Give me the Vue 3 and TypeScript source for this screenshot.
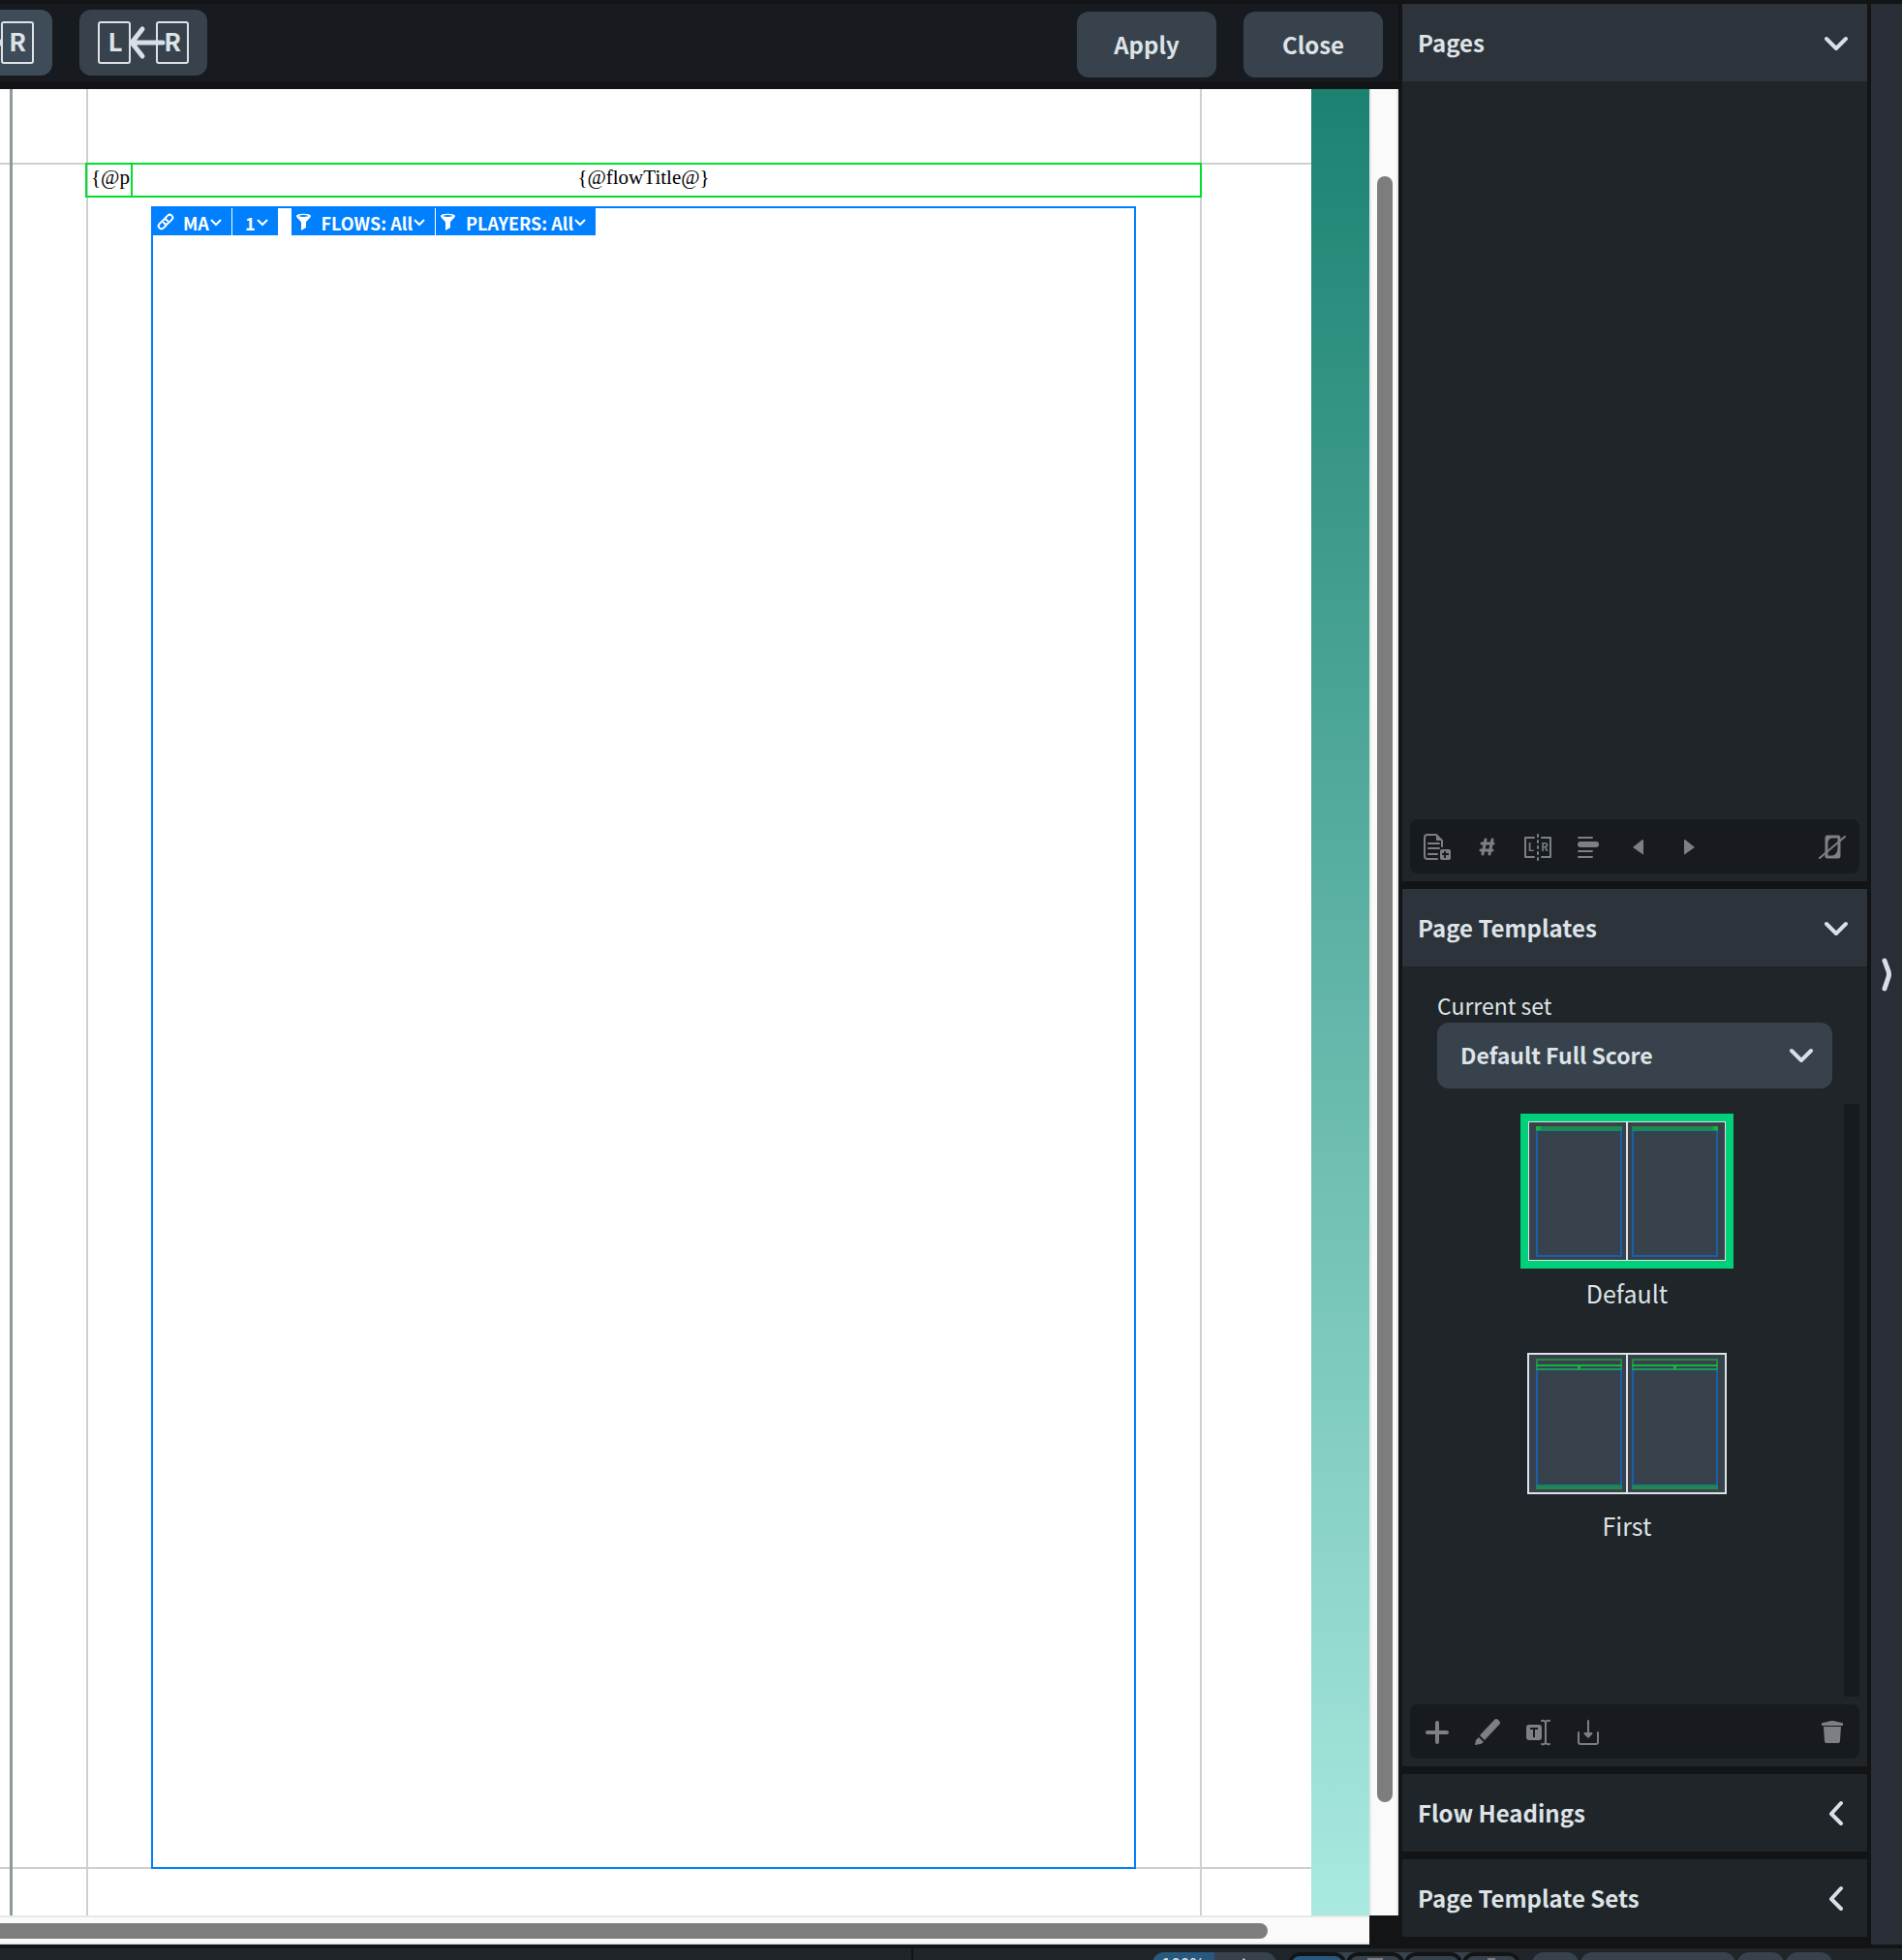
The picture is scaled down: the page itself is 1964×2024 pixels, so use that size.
<script setup lang="ts">
import { ref } from 'vue'

interface FrameTag {
  id: string
  label: string
  icon: 'link' | 'filter' | null
  gapBefore?: boolean
}

const tags: FrameTag[] = [
  { id: 'ma', label: 'MA', icon: 'link' },
  { id: 'number', label: '1', icon: null },
  { id: 'flows', label: 'FLOWS: All', icon: 'filter', gapBefore: true },
  { id: 'players', label: 'PLAYERS: All', icon: 'filter' },
]

const currentSet = ref('Default Full Score')
const selected = ref('Default')
</script>

<template>
  <div class="app">
    <div class="workspace">
      <main class="editor">
        <header class="topbar">
          <div class="copy-tools">
            <button class="btn copy active" type="button" aria-label="Copy left page to right">
              <svg width="96" height="46" viewBox="0 0 96 46">
                <rect class="box" x="2" y="2" width="32" height="42" rx="2" />
                <rect class="box" x="62" y="2" width="32" height="42" rx="2" />
                <text x="19" y="32">L</text>
                <text x="78" y="32">R</text>
                <path class="arrow" d="M28 23H60M49 9L60 23L49 37" />
              </svg>
            </button>
            <button class="btn copy" type="button" aria-label="Copy right page to left">
              <svg width="96" height="46" viewBox="0 0 96 46">
                <rect class="box" x="2" y="2" width="32" height="42" rx="2" />
                <rect class="box" x="62" y="2" width="32" height="42" rx="2" />
                <text x="19" y="32">L</text>
                <text x="78" y="32">R</text>
                <path class="arrow" d="M68 23H36M47 9L36 23L47 37" />
              </svg>
            </button>
          </div>
          <div class="actions">
            <button class="btn" type="button"><span>Apply</span></button>
            <button class="btn" type="button"><span>Close</span></button>
          </div>
        </header>

        <div class="view">
          <div class="view-main">
            <div class="page">
              <i class="guide h top"></i>
              <i class="guide h bottom"></i>
              <i class="guide v left"></i>
              <i class="guide v right"></i>
              <i class="guide v edge"></i>
              <div class="text-frame">
                <span class="token">{@flowTitle@}</span>
                <div class="number-frame"><span class="token">{@p</span></div>
              </div>
              <div class="music-frame">
                <button
                  v-for="tag in tags"
                  :key="tag.id"
                  type="button"
                  class="tag"
                  :class="{ spaced: tag.gapBefore, plain: !tag.icon }"
                >
                  <svg v-if="tag.icon === 'link'" class="tag-icon" width="18" height="18" viewBox="0 0 18 18">
                    <g transform="rotate(-45 9 9)" fill="none" stroke="#fff" stroke-width="2" stroke-linecap="round">
                      <path d="M7 12H3a3 3 0 0 1 0-6H8a3 3 0 0 1 3 4" />
                      <path d="M11 6H15a3 3 0 0 1 0 6H10a3 3 0 0 1-3-4" />
                    </g>
                  </svg>
                  <svg v-else-if="tag.icon === 'filter'" class="tag-icon" width="18" height="18" viewBox="0 0 18 18">
                    <path d="M1 3C1 0 16 0 16 3C16 5 11 8 11 10V15L6 18V10C6 8 1 5 1 3Z" fill="#fff" />
                    <path d="M3 3Q8 1 14 3Q8 5 3 3Z" fill="#0080ff" />
                  </svg>
                  <span>{{ tag.label }}</span>
                  <svg width="12" height="8" viewBox="0 0 12 8">
                    <path d="M1 1L6 6L11 1" fill="none" stroke="#fff" stroke-width="2" />
                  </svg>
                </button>
              </div>
            </div>
            <div class="backdrop"></div>
            <div class="vscroll"><div class="vthumb"></div></div>
          </div>
          <div class="hscroll"><div class="hthumb"></div></div>
        </div>
      </main>

      <aside class="sidebar">
        <section class="panel pages">
          <h2>
            <button class="head open" type="button">
              <span>Pages</span>
              <svg width="24" height="24" viewBox="0 0 24 24"><path d="M2 8L12 18L22 8" /></svg>
            </button>
          </h2>
          <div class="pages-list"></div>
          <div class="tools">
            <button type="button" aria-label="Insert pages">
              <svg viewBox="0 0 32 32">
                <path class="ln" d="M16 29H6a3 3 0 0 1-3-3V7a3 3 0 0 1 3-3h9l6 6v6" />
                <path d="M15 4V10H21Z" />
                <path class="ln" d="M7 13H18M7 18H18M7 24H16" />
                <rect x="19" y="19" width="11" height="11" rx="2" />
                <path class="cut" d="M24 21V28M21 24H28" />
              </svg>
            </button>
            <button type="button" aria-label="Page number change">
              <svg viewBox="0 0 32 32">
                <path class="ln w3" d="M14 9L11 24M21 9L18 24M10 13H22M9 20H21" />
              </svg>
            </button>
            <button type="button" aria-label="Swap pages">
              <svg viewBox="0 0 32 32">
                <path class="ln" d="M12 7H3V27H12M20 7H29V27H20" />
                <path class="ln" d="M16 4V30" stroke-dasharray="2 4" />
                <text x="9" y="21">L</text>
                <text x="23" y="21">R</text>
              </svg>
            </button>
            <button type="button" aria-label="Insert frame break">
              <svg viewBox="0 0 32 32">
                <path class="ln" d="M6 7H20M6 21H20M6 27H20" />
                <rect x="5" y="11" width="22" height="6" rx="3" />
              </svg>
            </button>
            <button type="button" aria-label="Previous">
              <svg viewBox="0 0 32 32"><path d="M10 17L20 9Q21 9 21 10V24Q21 25 20 24Z" /></svg>
            </button>
            <button type="button" aria-label="Next">
              <svg viewBox="0 0 32 32"><path d="M22 17L12 9Q11 9 11 10V24Q11 25 12 24Z" /></svg>
            </button>
            <button class="last" type="button" aria-label="Remove overrides">
              <svg viewBox="0 0 32 32">
                <rect class="ln w3" x="10" y="6" width="13" height="21" rx="1" />
                <path d="M11 7H16Q12 8 11 13ZM22 26H16Q21 24 22 18Z" />
                <path class="ln" d="M3 28L29 6" />
              </svg>
            </button>
          </div>
        </section>

        <section class="panel templates">
          <h2>
            <button class="head open" type="button">
              <span>Page Templates</span>
              <svg width="24" height="24" viewBox="0 0 24 24"><path d="M2 8L12 18L22 8" /></svg>
            </button>
          </h2>
          <div class="set-field">
            <label for="current-set">Current set</label>
            <div class="select-wrap">
              <select id="current-set" v-model="currentSet">
                <option>Default Full Score</option>
              </select>
              <svg width="24" height="24" viewBox="0 0 24 24"><path d="M2 7L12 17L22 7" /></svg>
            </div>
          </div>
          <div class="list-row">
            <div class="template-list">
              <button
                type="button"
                class="template"
                :class="{ selected: selected === 'Default' }"
                @click="selected = 'Default'"
              >
                <svg width="220" height="160" viewBox="0 0 220 160" shape-rendering="crispEdges">
                  <rect width="220" height="160" fill="#00d079" />
                  <rect x="8" y="8" width="204" height="144" fill="#dde3e6" />
                  <rect x="9" y="9" width="202" height="142" fill="#37424d" />
                  <rect x="109" y="9" width="2" height="142" fill="#dde3e6" />
                  <g v-for="x in [16, 115]" :key="x">
                    <rect :x="x + 1" y="15" width="87" height="132" fill="none" stroke="#1a5fa9" stroke-width="2" />
                    <rect :x="x" y="13" width="89" height="3" fill="#268746" />
                    <rect :x="x" y="16" width="89" height="2" fill="#0d8a72" />
                    <rect :x="x === 16 ? 16 : 199" y="13" width="5" height="4" fill="#16b43b" />
                  </g>
                </svg>
                <span>Default</span>
              </button>
              <button
                type="button"
                class="template"
                :class="{ selected: selected === 'First' }"
                @click="selected = 'First'"
              >
                <svg width="220" height="160" viewBox="0 0 220 160" shape-rendering="crispEdges">
                  <rect x="7" y="7" width="206" height="146" fill="#dde3e6" />
                  <rect x="9" y="9" width="202" height="142" fill="#37424d" />
                  <rect x="109" y="9" width="2" height="142" fill="#dde3e6" />
                  <g v-for="x in [16, 115]" :key="x">
                    <rect :x="x + 1" y="24" width="87" height="120" fill="none" stroke="#1a5fa9" stroke-width="2" />
                    <rect :x="x + 1" y="14" width="87" height="10" fill="none" stroke="#268746" stroke-width="2" />
                    <rect :x="x" y="19" width="89" height="2" fill="#16b43b" />
                    <rect :x="x" y="23" width="89" height="2" fill="#159a6c" />
                    <rect :x="x + 43" y="20" width="3" height="4" fill="#16b43b" />
                    <rect :x="x" y="143" width="89" height="2" fill="#14807d" />
                    <rect :x="x" y="145" width="89" height="3" fill="#268746" />
                  </g>
                </svg>
                <span>First</span>
              </button>
            </div>
            <div class="list-scroll"></div>
          </div>
          <div class="tools">
            <button type="button" aria-label="New template">
              <svg viewBox="0 0 32 32"><path class="ln w4" d="M16 7V27M6 17H26" /></svg>
            </button>
            <button type="button" aria-label="Edit template">
              <svg viewBox="0 0 32 32">
                <path d="M8 20L23 4Q25 2 27 4L28 5Q30 7 28 9L13 25Z" />
                <path d="M7 22L12 27L9 29L3 30L4 25Z" />
              </svg>
            </button>
            <button type="button" aria-label="Rename template">
              <svg viewBox="0 0 32 32">
                <rect x="4" y="9" width="16" height="16" rx="3" />
                <path class="cut" d="M8 13H16M12 13V22" />
                <path class="ln" d="M24 7V27M20 5Q24 4 24 8Q24 4 28 5M20 29Q24 30 24 26Q24 30 28 29" />
              </svg>
            </button>
            <button type="button" aria-label="Import template">
              <svg viewBox="0 0 32 32">
                <path class="ln" d="M6 17V27Q6 29 8 29H24Q26 29 26 27V17M16 5V18" />
                <path d="M12 17H20Q21 18 20 19L16 23L12 19Q11 18 12 17Z" />
              </svg>
            </button>
            <button class="last" type="button" aria-label="Delete template">
              <svg viewBox="0 0 32 32">
                <path d="M5 10V8Q5 7 6 7L11 6Q16 4 21 6L26 7Q27 7 27 8V10Z" />
                <path d="M7 11H25L24 26Q24 28 22 28H10Q8 28 8 26Z" />
              </svg>
            </button>
          </div>
        </section>

        <section class="panel">
          <h2>
            <button class="head" type="button">
              <span>Flow Headings</span>
              <svg width="24" height="26" viewBox="0 0 24 26"><path d="M17 3L7 14L17 24" /></svg>
            </button>
          </h2>
        </section>
        <section class="panel">
          <h2>
            <button class="head" type="button">
              <span>Page Template Sets</span>
              <svg width="24" height="26" viewBox="0 0 24 26"><path d="M17 3L7 14L17 24" /></svg>
            </button>
          </h2>
        </section>
      </aside>

      <button class="collapse" type="button" aria-label="Hide right zone">
        <svg width="12" height="36" viewBox="0 0 12 36"><path d="M4 4L8 15Q9 18 8 21L4 33" /></svg>
      </button>
    </div>

    <footer class="status">
      <div class="status-left"></div>
      <div class="status-right">
        <div class="zoom-group">
          <button type="button" class="on">100%</button>
          <button type="button" aria-label="Adjust view">
            <svg width="12" height="12" viewBox="0 0 12 12"><path d="M4 0L6 2V12H3V2Z" fill="#dde3e6" /><rect x="8" y="2" width="2" height="9" fill="#dde3e6" /></svg>
          </button>
        </div>
        <div class="view-group">
          <button type="button" class="on" aria-label="View 1"></button>
          <button type="button" aria-label="View 2"><i class="wide"></i></button>
          <button type="button" aria-label="View 3"></button>
          <button type="button" aria-label="View 4"><i></i></button>
        </div>
        <div class="zoom-controls">
          <button type="button" aria-label="Zoom out"></button>
          <button type="button" class="long" aria-label="Zoom level"></button>
          <button type="button" aria-label="Zoom in"></button>
          <button type="button" aria-label="Zoom options"></button>
        </div>
      </div>
    </footer>
  </div>
</template>

<style>
body {
  margin: 0;
  background: #121416;
}
</style>

<style scoped>
.app {
  display: flex;
  flex-direction: column;
  height: 100vh;
  overflow: hidden;
  background: #121416;
  color: #dde3e6;
  font-family: 'Noto Sans CJK SC', 'Noto Sans', sans-serif;
  font-size: 23px;
}
.app *,
.app {
  box-sizing: border-box;
}
button,
select {
  margin: 0;
  padding: 0;
  border: 0;
  background: none;
  color: inherit;
  font: inherit;
}
h2 {
  margin: 0;
  font-size: 24px;
}
svg {
  display: block;
  flex: none;
}
.workspace {
  display: flex;
  flex: 1;
  min-height: 0;
  gap: 4px;
  padding-top: 4px;
}
.editor {
  display: flex;
  flex: 1;
  flex-direction: column;
  gap: 8px;
  min-width: 0;
  overflow: hidden;
}
.topbar {
  display: flex;
  flex: none;
  align-items: center;
  justify-content: space-between;
  height: 80px;
  padding-right: 16px;
  background: #171b20;
}
.copy-tools,
.actions {
  display: flex;
  gap: 28px;
}
.copy-tools {
  margin-left: -78px;
}
.actions {
  padding-top: 4px;
}
.btn {
  display: flex;
  align-items: center;
  justify-content: center;
  width: 144px;
  height: 68px;
  border-radius: 12px;
  background: #37424d;
  font-size: 24px;
  font-weight: 700;
}
.btn span,
.head span {
  padding-bottom: 2px;
}
.copy {
  width: 132px;
}
.copy.active {
  background: #3e4c59;
}
.copy .box {
  fill: none;
  stroke: #dde3e6;
  stroke-width: 2;
}
.copy text {
  fill: #dde3e6;
  font-size: 26px;
  font-weight: 700;
  text-anchor: middle;
}
.copy .arrow {
  fill: none;
  stroke: #dadee8;
  stroke-width: 5;
  stroke-linecap: round;
  stroke-linejoin: round;
}
.view {
  display: flex;
  flex: 1;
  flex-direction: column;
  min-height: 0;
}
.view-main {
  display: flex;
  flex: 1;
  min-height: 0;
}
.page {
  position: relative;
  flex: 1;
  overflow: hidden;
  background: #fff;
}
.backdrop {
  width: 60px;
  background: linear-gradient(#1b8271, #a9e9e0);
}
.vscroll {
  width: 30px;
  padding: 90px 6px 117px;
  border: solid #e8e8e8;
  border-width: 0 2px;
  background: #fafafa;
}
.vthumb {
  width: 16px;
  height: 100%;
  border-radius: 8px;
  background: #7d7d7d;
}
.hscroll {
  flex: none;
  height: 30px;
  margin-right: 30px;
  padding: 6px 105px 6px 0;
  border: solid #e8e8e8;
  border-width: 2px 0;
  background: #fafafa;
}
.hthumb {
  height: 16px;
  border-radius: 0 8px 8px 0;
  background: #7d7d7d;
}
.guide {
  position: absolute;
  background: #cfcfcf;
}
.guide.h {
  left: 0;
  right: 0;
  height: 2px;
}
.guide.v {
  top: 0;
  bottom: 0;
  width: 2px;
}
.guide.top {
  top: 76px;
}
.guide.bottom {
  bottom: 48px;
}
.guide.left {
  left: 89px;
}
.guide.right {
  right: 113px;
}
.guide.edge {
  left: 10px;
  width: 3px;
  background: #8c9b99;
}
.text-frame {
  position: absolute;
  top: 76px;
  left: 88px;
  right: 113px;
  height: 36px;
  border: 2px solid #00de2d;
  color: #000;
  text-align: center;
}
.token {
  display: block;
  font-family: 'Liberation Serif', serif;
  font-size: 21px;
  line-height: 26px;
}
.number-frame {
  position: absolute;
  top: 0;
  bottom: 0;
  left: 0;
  width: 47px;
  padding-left: 4px;
  border-right: 2px solid #00de2d;
  text-align: left;
}
.music-frame {
  position: absolute;
  top: 121px;
  left: 156px;
  right: 181px;
  bottom: 48px;
  display: flex;
  align-items: flex-start;
  border: 2px solid #0080ff;
}
.tag {
  display: flex;
  align-items: center;
  height: 28px;
  padding: 2px 10px 0 4px;
  background: #0080ff;
  color: #fff;
  font-size: 18px;
  font-weight: 700;
  line-height: 26px;
}
.tag + .tag {
  margin-left: 1px;
}
.tag.spaced {
  margin-left: 14px;
}
.tag.plain {
  padding-left: 13px;
}
.tag span {
  margin-right: 1px;
}
.tag-icon {
  margin: -2px 9px 0 0;
}
.sidebar {
  display: flex;
  flex: none;
  flex-direction: column;
  gap: 8px;
  width: 480px;
  padding-bottom: 8px;
}
.panel {
  display: flex;
  flex: none;
  flex-direction: column;
  background: #202529;
}
.panel.pages {
  flex: 1;
}
.pages-list {
  flex: 1;
}
.head {
  display: flex;
  align-items: center;
  justify-content: space-between;
  width: 100%;
  height: 80px;
  padding: 0 20px 0 16px;
  font-weight: 700;
  text-align: left;
}
.head.open {
  background: #2c333b;
}
.head svg path,
.select-wrap svg path,
.collapse svg path {
  fill: none;
  stroke: #dadee8;
  stroke-width: 4;
  stroke-linecap: round;
  stroke-linejoin: round;
}
.collapse svg path {
  stroke-width: 5;
}
.tools {
  display: flex;
  flex: none;
  align-items: center;
  height: 56px;
  margin: 8px;
  padding: 0 2px;
  border-radius: 8px;
  background: #171b20;
}
.tools button {
  display: flex;
  align-items: center;
  justify-content: center;
  width: 52px;
  height: 56px;
}
.tools .last {
  margin-left: auto;
}
.tools svg {
  width: 32px;
  height: 32px;
  fill: #7c7f83;
}
.tools text {
  font-size: 11px;
  font-weight: 700;
  text-anchor: middle;
}
.tools .ln {
  fill: none;
  stroke: #7c7f83;
  stroke-width: 2;
  stroke-linecap: round;
  stroke-linejoin: round;
}
.tools .ln.w3 {
  stroke-width: 3;
}
.tools .ln.w4 {
  stroke-width: 4;
}
.tools .cut {
  fill: none;
  stroke: #171b20;
  stroke-width: 2;
}
.set-field {
  padding: 24px 36px 16px;
}
.set-field label {
  display: block;
  height: 34px;
  line-height: 32px;
}
.select-wrap {
  position: relative;
}
.select-wrap select {
  width: 100%;
  height: 68px;
  padding: 0 60px 2px 24px;
  border-radius: 12px;
  background: #37424d;
  font-weight: 700;
  appearance: none;
}
.select-wrap svg {
  position: absolute;
  top: 22px;
  right: 20px;
  pointer-events: none;
}
.list-row {
  display: flex;
  height: 612px;
  padding-right: 8px;
}
.template-list {
  display: flex;
  flex: 1;
  flex-direction: column;
  align-items: center;
  gap: 26px;
  padding: 10px 0 0 8px;
}
.template span {
  display: block;
  padding-bottom: 4px;
  font-size: 25px;
  line-height: 50px;
}
.list-scroll {
  width: 16px;
  background: #171b20;
}
.collapse {
  display: flex;
  flex: none;
  align-items: center;
  justify-content: center;
  width: 32px;
  background: #292d36;
}
.status {
  display: flex;
  flex: none;
  height: 16px;
  border-top: 4px solid #121416;
  overflow: hidden;
  background: #202529;
}
.status-left {
  width: 48%;
  border-right: 2px solid #121416;
}
.status-right {
  display: flex;
  flex: 1;
  justify-content: flex-end;
  height: 56px;
  padding: 4px 72px 0 0;
}
.zoom-group {
  display: flex;
  margin-right: 12px;
}
.zoom-group button {
  display: flex;
  justify-content: center;
  width: 64px;
  height: 48px;
  padding-top: 2px;
  border-radius: 0 12px 12px 0;
  background: #37424d;
  font-size: 17px;
  font-weight: 500;
  line-height: 20px;
}
.zoom-group svg {
  margin-top: 4px;
}
.zoom-group .on {
  border-radius: 12px 0 0 12px;
  background: #285a80;
}
.view-group {
  display: flex;
  width: 240px;
  margin-right: 12px;
  background: #37424d;
  border-radius: 12px;
}
.view-group button {
  display: flex;
  justify-content: center;
  width: 60px;
  height: 48px;
  border: 4px solid #121416;
  border-radius: 12px;
  background: #37424d;
}
.view-group .on {
  background: #285a80;
}
.view-group i {
  width: 8px;
  height: 16px;
  margin-top: 2px;
  background: #7c7f83;
}
.view-group .wide {
  width: 16px;
}
.zoom-controls {
  display: flex;
  gap: 2px;
}
.zoom-controls button {
  width: 48px;
  height: 48px;
  border-radius: 12px;
  background: #37424d;
}
.zoom-controls .long {
  width: 160px;
}
</style>
